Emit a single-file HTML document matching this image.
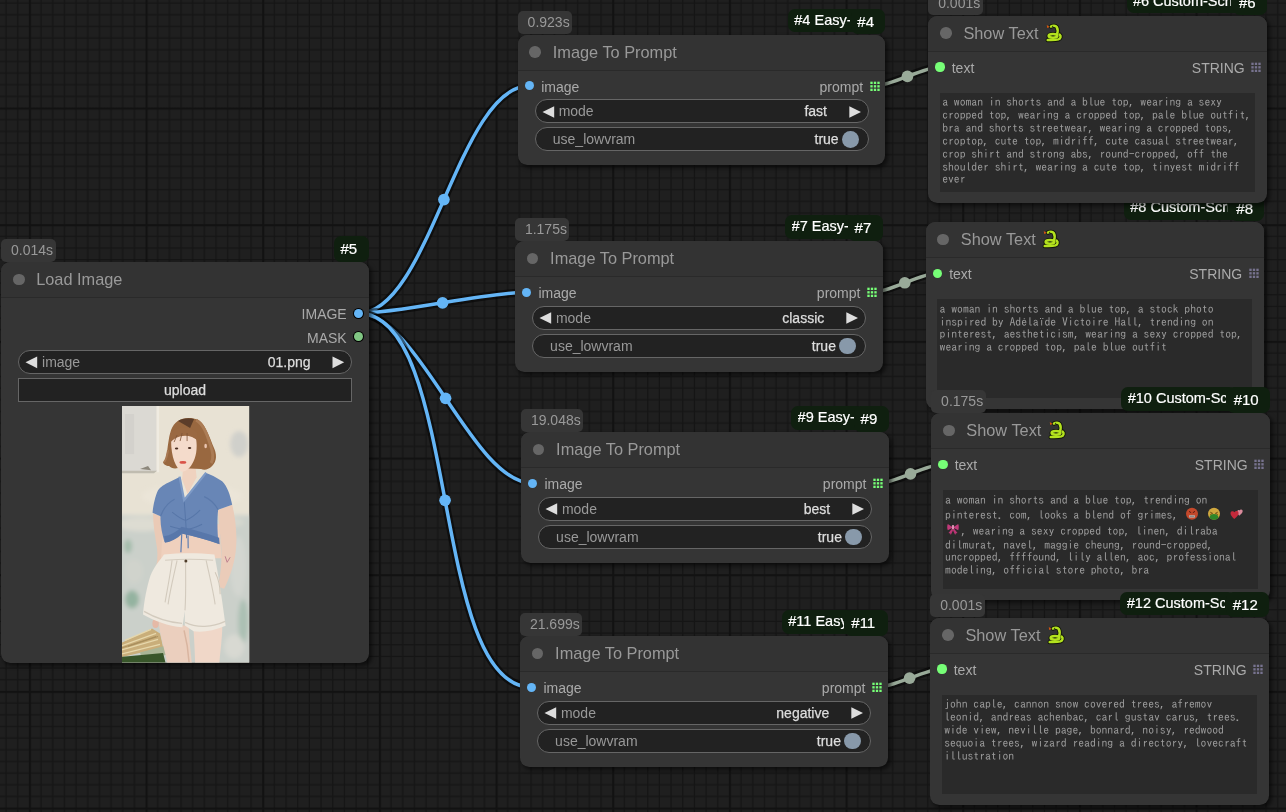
<!DOCTYPE html>
<html><head><meta charset="utf-8"><title>ComfyUI</title><style>
html,body{margin:0;padding:0;background:#1f1f1f;}
#c{will-change:transform;position:relative;width:1286px;height:812px;overflow:hidden;background:#1f1f1f;font-family:"Liberation Sans",Arial,sans-serif;}
#c svg{position:absolute;left:0;top:0;overflow:visible}
.n{position:absolute;background:#353535;border-radius:9.3px;box-shadow:2.3px 2.3px 4px rgba(0,0,0,.55);}
.n .tt{position:absolute;left:0;top:0;right:0;height:35px;background:#333;border-radius:9.3px 9.3px 0 0;}
.n .sep{position:absolute;left:0;right:0;top:35px;height:1.2px;background:rgba(0,0,0,.2);}
.n .dot{position:absolute;left:11.7px;top:11.7px;width:11.7px;height:11.7px;border-radius:50%;background:#666;}
.n .title{position:absolute;left:35px;top:0;height:35px;line-height:35px;font-size:16.33px;color:#999;white-space:nowrap;}
.t{position:absolute;font-size:14px;line-height:16px;height:16px;white-space:nowrap;color:#aaa;}
.r{text-align:right;}
.sl{position:absolute;width:9.34px;height:9.34px;border-radius:50%;}
.so{box-shadow:0 0 0 1px #000;}
.w{position:absolute;height:24px;box-sizing:border-box;background:#222;border:1.17px solid #666;border-radius:12px;}
.w.b{border-radius:0;}
.lab{color:#999;}
.val{color:#ddd;-webkit-text-stroke:.25px #ddd;}
.tb{position:absolute;height:23px;background:#363636;border-radius:5px;color:#999;font-size:14px;line-height:23px;white-space:nowrap;box-sizing:border-box;}
.gb{position:absolute;top:-25.6px;background:#0f1f0f;border-radius:7px;color:#fff;-webkit-text-stroke:.2px #fff;white-space:nowrap;overflow:hidden;box-sizing:border-box;padding-left:6.4px;}
.gw{height:23.3px;font-size:14.5px;line-height:22.5px;}
.gw span{display:block;overflow:hidden;}
.gs{height:25.2px;font-size:15px;line-height:25.4px;}
.ta{position:absolute;background:#2a2a2a;overflow:hidden;}
.ta div{position:absolute;left:2.4px;top:3.6px;font-family:"IPAGothic","Liberation Mono",monospace;font-size:11.667px;line-height:12.84px;color:#9b9b9b;white-space:pre;}
#c svg.e{position:static;vertical-align:-3.94px;overflow:hidden}
</style></head><body><div id="c">
<svg width="1286" height="812" viewBox="0 0 1286 812">
<defs><pattern id="g" patternUnits="userSpaceOnUse" x="-87.84" y="-9.17" width="116.67" height="116.67">
<rect width="116.67" height="116.67" fill="#1f1f1f"/>
<rect x="11.52" y="0" width="1.4" height="116.67" fill="#151515"/>
<rect y="11.52" x="0" height="1.4" width="116.67" fill="#151515"/>
<rect x="23.18" y="0" width="1.4" height="116.67" fill="#151515"/>
<rect y="23.18" x="0" height="1.4" width="116.67" fill="#151515"/>
<rect x="34.85" y="0" width="1.4" height="116.67" fill="#151515"/>
<rect y="34.85" x="0" height="1.4" width="116.67" fill="#151515"/>
<rect x="46.52" y="0" width="1.4" height="116.67" fill="#151515"/>
<rect y="46.52" x="0" height="1.4" width="116.67" fill="#151515"/>
<rect x="58.18" y="0" width="1.4" height="116.67" fill="#151515"/>
<rect y="58.18" x="0" height="1.4" width="116.67" fill="#151515"/>
<rect x="69.85" y="0" width="1.4" height="116.67" fill="#151515"/>
<rect y="69.85" x="0" height="1.4" width="116.67" fill="#151515"/>
<rect x="81.52" y="0" width="1.4" height="116.67" fill="#151515"/>
<rect y="81.52" x="0" height="1.4" width="116.67" fill="#151515"/>
<rect x="93.18" y="0" width="1.4" height="116.67" fill="#151515"/>
<rect y="93.18" x="0" height="1.4" width="116.67" fill="#151515"/>
<rect x="104.85" y="0" width="1.4" height="116.67" fill="#151515"/>
<rect y="104.85" x="0" height="1.4" width="116.67" fill="#151515"/>
<rect x="0" y="0" width="2.2" height="116.67" fill="#121212"/>
<rect x="0" y="0" height="2.2" width="116.67" fill="#121212"/>
</pattern></defs>
<rect width="1286" height="812" fill="url(#g)"/>
<path d="M358.4 313.33 C429.56 313.33 458.31 85.83 529.47 85.83" fill="none" stroke="rgba(0,0,0,.5)" stroke-width="8.2"/>
<path d="M358.4 313.33 C429.56 313.33 458.31 85.83 529.47 85.83" fill="none" stroke="#64b5f6" stroke-width="3.5"/>
<circle cx="443.93" cy="199.58" r="5.83" fill="#64b5f6"/>
<path d="M358.4 313.33 C400.82 313.33 484.35 292.33 526.77 292.33" fill="none" stroke="rgba(0,0,0,.5)" stroke-width="8.2"/>
<path d="M358.4 313.33 C400.82 313.33 484.35 292.33 526.77 292.33" fill="none" stroke="#64b5f6" stroke-width="3.5"/>
<circle cx="442.58" cy="302.83" r="5.83" fill="#64b5f6"/>
<path d="M358.4 313.33 C419.28 313.33 471.89 483.33 532.77 483.33" fill="none" stroke="rgba(0,0,0,.5)" stroke-width="8.2"/>
<path d="M358.4 313.33 C419.28 313.33 471.89 483.33 532.77 483.33" fill="none" stroke="#64b5f6" stroke-width="3.5"/>
<circle cx="445.58" cy="398.33" r="5.83" fill="#64b5f6"/>
<path d="M358.4 313.33 C461.46 313.33 428.71 687.33 531.77 687.33" fill="none" stroke="rgba(0,0,0,.5)" stroke-width="8.2"/>
<path d="M358.4 313.33 C461.46 313.33 428.71 687.33 531.77 687.33" fill="none" stroke="#64b5f6" stroke-width="3.5"/>
<circle cx="445.08" cy="500.33" r="5.83" fill="#64b5f6"/>
<path d="M874.8 85.83 C891.79 85.83 923.08 66.93 940.07 66.93" fill="none" stroke="rgba(0,0,0,.5)" stroke-width="8.2"/>
<path d="M874.8 85.83 C891.79 85.83 923.08 66.93 940.07 66.93" fill="none" stroke="#9a9" stroke-width="3.5"/>
<circle cx="907.43" cy="76.38" r="5.83" fill="#9a9"/>
<path d="M872.1 292.33 C889.13 292.33 920.44 273.23 937.47 273.23" fill="none" stroke="rgba(0,0,0,.5)" stroke-width="8.2"/>
<path d="M872.1 292.33 C889.13 292.33 920.44 273.23 937.47 273.23" fill="none" stroke="#9a9" stroke-width="3.5"/>
<circle cx="904.78" cy="282.78" r="5.83" fill="#9a9"/>
<path d="M878.1 483.33 C895 483.33 926.07 464.33 942.97 464.33" fill="none" stroke="rgba(0,0,0,.5)" stroke-width="8.2"/>
<path d="M878.1 483.33 C895 483.33 926.07 464.33 942.97 464.33" fill="none" stroke="#9a9" stroke-width="3.5"/>
<circle cx="910.53" cy="473.83" r="5.83" fill="#9a9"/>
<path d="M877.1 687.33 C893.98 687.33 925.19 668.93 942.07 668.93" fill="none" stroke="rgba(0,0,0,.5)" stroke-width="8.2"/>
<path d="M877.1 687.33 C893.98 687.33 925.19 668.93 942.07 668.93" fill="none" stroke="#9a9" stroke-width="3.5"/>
<circle cx="909.58" cy="678.13" r="5.83" fill="#9a9"/>
</svg>
<div class="n" style="left:1.2px;top:262px;width:367.7px;height:401px">
<div class="tt"></div><div class="sep"></div><div class="dot"></div><div class="title">Load Image</div>
<div class="sl so" style="left:352.53px;top:46.66px;background:#64b5f6"></div>
<div class="t r" style="right:22.17px;top:44.36px">IMAGE</div>
<div class="sl so" style="left:352.53px;top:70px;background:#81c784"></div>
<div class="t r" style="right:22.17px;top:67.7px">MASK</div>
<div class="w" style="left:16.92px;top:88.22px;width:334px"></div>
<svg width="10" height="10" fill="#ddd"><path d="M36.17 94.5L24.5 100.33L36.17 106.17Z"/><path d="M331.53 94.5L343.2 100.33L331.53 106.17Z"/></svg>
<div class="t lab" style="left:40.83px;top:92.2px">image</div>
<div class="t r val" style="right:58.33px;top:92.2px">01.png</div>
<div class="w b" style="left:16.92px;top:116.22px;width:334px"></div>
<div class="t val" style="left:0;width:367.7px;text-align:center;top:120.2px">upload</div>
<svg style="left:120.6px;top:144.2px" width="127.2" height="256.5" viewBox="0 0 127 256" preserveAspectRatio="none">
<defs><filter id="bl" x="-5%" y="-5%" width="110%" height="110%"><feGaussianBlur stdDeviation="0.55"/></filter>
<filter id="b2" x="-20%" y="-20%" width="140%" height="140%"><feGaussianBlur stdDeviation="2.2"/></filter>
<clipPath id="pc"><rect width="127" height="256"/></clipPath></defs>
<g clip-path="url(#pc)">
<rect x="-3" y="-3" width="133" height="262" fill="#e8e2d4"/>
<g filter="url(#b2)">
<rect x="-6" y="109" width="140" height="152" fill="#cbd0ca"/>
<ellipse cx="20" cy="118" rx="26" ry="7" fill="#dddcd2"/>
<ellipse cx="98" cy="116" rx="24" ry="6" fill="#d6d8cf"/>
<ellipse cx="10" cy="193" rx="7" ry="9" fill="#94b3a0"/>
<ellipse cx="6" cy="140" rx="4" ry="7" fill="#a3bcab"/>
<ellipse cx="12" cy="165" rx="9" ry="12" fill="#d0d3cc"/>
<ellipse cx="116" cy="160" rx="8" ry="30" fill="#d3d6d0"/>
<ellipse cx="121" cy="215" rx="5" ry="22" fill="#abc0b3"/>
<ellipse cx="112" cy="240" rx="10" ry="12" fill="#d8d9d2"/>
<ellipse cx="117" cy="38" rx="9" ry="13" fill="#d0d0cb"/>
<ellipse cx="70" cy="90" rx="50" ry="12" fill="#ebe5d8"/>
</g>
<g filter="url(#bl)">
<rect x="-3" y="-3" width="37.6" height="68" fill="#dbd9d3"/>
<rect x="3" y="8" width="9" height="40" fill="#d3d1cc"/>
<rect x="34.6" y="-3" width="2.4" height="69" fill="#efebe1"/>
<path d="M-3 64.500H35L32 67H-3z" fill="#c0bcb0"/>
<path d="M18 63l8-3 3 4z" fill="#8d887c"/>
<path d="M-2 237L30 222l8 5 3 14-43 10z" fill="#c9ae7a"/>
<path d="M-2 240l36-13M-2 244l38-11M3 234l26-11M-2 248l40-10" stroke="#e6d7ab" stroke-width="1.300" fill="none"/>
<path d="M-2 242l36-12M6 240l30-10" stroke="#9d8453" stroke-width=".7" fill="none"/>
<path d="M18 246l26-7 2 9-26 5z" fill="#a9b596"/>
<path d="M-2 250.500l43-4 3 12H-2z" fill="#38562a"/>
<path d="M36.300 214L66.700 220c.3 14 2.300 28 3.200 38H45.500C43 244 38 230 36.300 214z" fill="#ebcfbe"/>
<path d="M71.500 223l28.800-5c-.3 15-2.300 28-3.300 40H73c0-11-1-23-1.500-35z" fill="#f0d7c8"/>
<path d="M62 224q4 16 5 32" stroke="#d9b5a0" stroke-width="1.500" fill="none"/>
<ellipse cx="33.500" cy="217" rx="3.200" ry="4.500" fill="#e5b9a6"/>
<path d="M31 107c0 11 2 23 4 35 1 8 0 16-2 24l5 2c3-10 4-20 4-30-1-10-3-20-3.500-28z" fill="#eacab6"/>
<path d="M96 103.500l14-5c3 12 5 27 4 42-1 15-6 30-12 42l-6-2c3-15 4-30 3-42-1-13-3-23-3-35z" fill="#ebccb9"/>
<path d="M103 150l2 6 3-5" stroke="#b9788a" stroke-width=".9" fill="none"/>
<path d="M41 118h56l2.500 34H39z" fill="#efd0bd"/>
<path d="M41.900 148.200c16-1.700 34-1.700 50.400 0 2.700 14 6.700 37 10.400 66l.8 5c-11.500 5-23.500 7-32 5.500l-8.800-5.700v-14.300l-2.400 16c-14.300-.7-28.300-6.700-39.300-12.700 1-14 4-28 7.200-38.200 3.800-9.800 9.800-15.800 13.700-21.600z" fill="#efe9df"/>
<path d="M43 154c16-1.500 33-1.500 48 0" stroke="#d4ccbf" stroke-width="1" fill="none"/>
<path d="M50 154c-2 16-5 30-7 42M55 154c-3 14-7 30-9 44M84 154c3 14 7 30 9 44M63.500 156c0 16 .5 32-.6 48" stroke="#d2cabd" stroke-width="1.100" fill="none"/>
<path d="M22 205c12 7 25 11 38 12M63 216c12 6 27 5 40-1" stroke="#d3cbbe" stroke-width="1.300" fill="none"/>
<path d="M93 166c3 6 5 14 5 22" stroke="#cfc6b8" stroke-width="1" fill="none"/>
<circle cx="63.800" cy="154.600" r="1.500" fill="#4f3d2c"/>
<path d="M58 70.500l-9 4.500c-7 3-11 6-13 9-3 6-5 16-5.500 22.500l8 3.500c-.5 8 1.500 18 4 26 6-1 12-4 17-9 12 3 25 6 37 10.500-1.500-12-1.500-25-.5-34l14-5c-2-10.500-5-18.500-10-23.500-6-4-12-7-16.500-8.500L62 94z" fill="#6886b6"/>
<path d="M38.500 110c3-8 8-14 14-17M96 103.500c-4-7-9-11-14-13" stroke="#5a79ab" stroke-width="1.200" fill="none"/>
<path d="M62 94c1 12 2 25 2.500 38M50 106c5 4 9 7 13 8M78 104c-5 5-9 8-14 10M48 120c6 2 11 3 15.500 3M80 118c-6 3-11 5-16 5" stroke="#5776a8" stroke-width="1" fill="none"/>
<path d="M42 130c6-1 12-4 17.500-9.500 12 3 25 6.500 37.500 11l.5 6.500c-12.500-4.500-25.500-8-37.500-10.500-5 5-11 8-17 9z" fill="#5877aa"/>
<path d="M57.500 70.500L62 94 84 66.500" stroke="#7d9ac6" stroke-width="2.200" fill="none"/>
<path d="M59.700 127l-.9 19M65.900 129l.2 13" stroke="#5f7eb2" stroke-width="1.200" fill="none"/>
<path d="M61 62l12-5 1.500 14-9 17-5.500-15z" fill="#efd2bf"/>
<path d="M66.700 12c6.300 0 12.300 2 15.300 8 4 7 6 12 9 20 4 8 4 15-1 20-4 4-8 4-11 3l-23-1c-4 1-7 0-9-2-3 0-6-2-6-4 3-2 3-6 4-10 1-8 2-16 4-22 3-8 9-12 17.700-12z" fill="#99683f"/>
<path d="M56 15c4-3 11-3.500 16-2l-4 9z" fill="#5b3e29"/>
<path d="M74 14c8 5 11 15 14 24 3 8 4 14 1 19" stroke="#ab7b54" stroke-width="3" fill="none"/>
<path d="M46 44c-1 6-2 10-4 12" stroke="#a87852" stroke-width="2" fill="none"/>
<path d="M49 34C55 27 68 27 74 33c1.500 9 0 19-4 25-3 5-7 8-10.500 7.500C54 62 49 52 49 34z" fill="#f4dbcb"/>
<path d="M47 38c7-10 21-11 29-3l-1-8c-7-8-21-7-27 1z" fill="#9a6943"/>
<path d="M52 36l3-7M58 35l2-8M65 35l0-8" stroke="#7d5335" stroke-width=".8" fill="none"/>
<ellipse cx="54.500" cy="42.500" rx="1.700" ry="1" fill="#4a2f22"/><ellipse cx="67.500" cy="42" rx="1.700" ry="1" fill="#4a2f22"/>
<ellipse cx="60.800" cy="56.300" rx="3.400" ry="1.400" fill="#d9534a"/>
<ellipse cx="83.500" cy="40" rx="1.300" ry="2.200" fill="#e9c4b0"/>
</g></g></svg>
<div class="tb" style="left:0;top:-23.3px;width:54.8px;padding-left:9.8px">0.014s</div>
<div class="gb gs" style="right:0;width:35.3px;padding-left:6.9px">#5</div>
</div>
<div class="n" style="left:517.8px;top:34.5px;width:367.5px;height:130.7px">
<div class="tt"></div><div class="sep"></div><div class="dot"></div><div class="title">Image To Prompt</div>
<div class="sl" style="left:7px;top:46.66px;background:#64b5f6"></div>
<div class="t" style="left:23.33px;top:44.36px">image</div>
<svg width="10" height="10" fill="#7f7"><rect x="352.33" y="46.67" width="2.33" height="2.33"/><rect x="352.33" y="50.17" width="2.33" height="2.33"/><rect x="352.33" y="53.67" width="2.33" height="2.33"/><rect x="355.83" y="46.67" width="2.33" height="2.33"/><rect x="355.83" y="50.17" width="2.33" height="2.33"/><rect x="355.83" y="53.67" width="2.33" height="2.33"/><rect x="359.33" y="46.67" width="2.33" height="2.33"/><rect x="359.33" y="50.17" width="2.33" height="2.33"/><rect x="359.33" y="53.67" width="2.33" height="2.33"/></svg>
<div class="t r" style="right:22.17px;top:44.36px">prompt</div>
<div class="w" style="left:16.92px;top:64.88px;width:333.8px"></div>
<svg width="10" height="10" fill="#ddd"><path d="M36.17 71.17L24.5 77L36.17 82.83Z"/><path d="M331.33 71.17L343 77L331.33 82.83Z"/></svg>
<div class="t lab" style="left:40.83px;top:68.87px">mode</div>
<div class="t r val" style="right:58.33px;top:68.87px">fast</div>
<div class="w" style="left:16.92px;top:92.88px;width:333.8px"></div>
<div class="t lab" style="left:35px;top:96.87px">use_lowvram</div>
<div class="t r val" style="right:46.67px;top:96.87px">true</div>
<div style="position:absolute;left:324.1px;top:96.6px;width:16.8px;height:16.8px;border-radius:50%;background:#89a"></div>
<div class="tb" style="left:0;top:-23.3px;width:54.4px;padding-left:9.8px">0.923s</div>
<div class="gb gw" style="right:25.4px;width:72px"><span style="width:56px">#4 Easy-Use</span></div>
<div class="gb gs" style="right:0;width:34.4px">#4</div>
</div>
<div class="n" style="left:515.1px;top:241px;width:367.5px;height:130.7px">
<div class="tt"></div><div class="sep"></div><div class="dot"></div><div class="title">Image To Prompt</div>
<div class="sl" style="left:7px;top:46.66px;background:#64b5f6"></div>
<div class="t" style="left:23.33px;top:44.36px">image</div>
<svg width="10" height="10" fill="#7f7"><rect x="352.33" y="46.67" width="2.33" height="2.33"/><rect x="352.33" y="50.17" width="2.33" height="2.33"/><rect x="352.33" y="53.67" width="2.33" height="2.33"/><rect x="355.83" y="46.67" width="2.33" height="2.33"/><rect x="355.83" y="50.17" width="2.33" height="2.33"/><rect x="355.83" y="53.67" width="2.33" height="2.33"/><rect x="359.33" y="46.67" width="2.33" height="2.33"/><rect x="359.33" y="50.17" width="2.33" height="2.33"/><rect x="359.33" y="53.67" width="2.33" height="2.33"/></svg>
<div class="t r" style="right:22.17px;top:44.36px">prompt</div>
<div class="w" style="left:16.92px;top:64.88px;width:333.8px"></div>
<svg width="10" height="10" fill="#ddd"><path d="M36.17 71.17L24.5 77L36.17 82.83Z"/><path d="M331.33 71.17L343 77L331.33 82.83Z"/></svg>
<div class="t lab" style="left:40.83px;top:68.87px">mode</div>
<div class="t r val" style="right:58.33px;top:68.87px">classic</div>
<div class="w" style="left:16.92px;top:92.88px;width:333.8px"></div>
<div class="t lab" style="left:35px;top:96.87px">use_lowvram</div>
<div class="t r val" style="right:46.67px;top:96.87px">true</div>
<div style="position:absolute;left:324.1px;top:96.6px;width:16.8px;height:16.8px;border-radius:50%;background:#89a"></div>
<div class="tb" style="left:0;top:-23.3px;width:54.4px;padding-left:9.8px">1.175s</div>
<div class="gb gw" style="right:25.4px;width:72px"><span style="width:56px">#7 Easy-Use</span></div>
<div class="gb gs" style="right:0;width:34.4px">#7</div>
</div>
<div class="n" style="left:521.1px;top:432px;width:367.5px;height:130.7px">
<div class="tt"></div><div class="sep"></div><div class="dot"></div><div class="title">Image To Prompt</div>
<div class="sl" style="left:7px;top:46.66px;background:#64b5f6"></div>
<div class="t" style="left:23.33px;top:44.36px">image</div>
<svg width="10" height="10" fill="#7f7"><rect x="352.33" y="46.67" width="2.33" height="2.33"/><rect x="352.33" y="50.17" width="2.33" height="2.33"/><rect x="352.33" y="53.67" width="2.33" height="2.33"/><rect x="355.83" y="46.67" width="2.33" height="2.33"/><rect x="355.83" y="50.17" width="2.33" height="2.33"/><rect x="355.83" y="53.67" width="2.33" height="2.33"/><rect x="359.33" y="46.67" width="2.33" height="2.33"/><rect x="359.33" y="50.17" width="2.33" height="2.33"/><rect x="359.33" y="53.67" width="2.33" height="2.33"/></svg>
<div class="t r" style="right:22.17px;top:44.36px">prompt</div>
<div class="w" style="left:16.92px;top:64.88px;width:333.8px"></div>
<svg width="10" height="10" fill="#ddd"><path d="M36.17 71.17L24.5 77L36.17 82.83Z"/><path d="M331.33 71.17L343 77L331.33 82.83Z"/></svg>
<div class="t lab" style="left:40.83px;top:68.87px">mode</div>
<div class="t r val" style="right:58.33px;top:68.87px">best</div>
<div class="w" style="left:16.92px;top:92.88px;width:333.8px"></div>
<div class="t lab" style="left:35px;top:96.87px">use_lowvram</div>
<div class="t r val" style="right:46.67px;top:96.87px">true</div>
<div style="position:absolute;left:324.1px;top:96.6px;width:16.8px;height:16.8px;border-radius:50%;background:#89a"></div>
<div class="tb" style="left:0;top:-23.3px;width:62.2px;padding-left:9.8px">19.048s</div>
<div class="gb gw" style="right:25.4px;width:72px"><span style="width:56px">#9 Easy-Use</span></div>
<div class="gb gs" style="right:0;width:34.4px">#9</div>
</div>
<div class="n" style="left:520.1px;top:636px;width:367.5px;height:130.7px">
<div class="tt"></div><div class="sep"></div><div class="dot"></div><div class="title">Image To Prompt</div>
<div class="sl" style="left:7px;top:46.66px;background:#64b5f6"></div>
<div class="t" style="left:23.33px;top:44.36px">image</div>
<svg width="10" height="10" fill="#7f7"><rect x="352.33" y="46.67" width="2.33" height="2.33"/><rect x="352.33" y="50.17" width="2.33" height="2.33"/><rect x="352.33" y="53.67" width="2.33" height="2.33"/><rect x="355.83" y="46.67" width="2.33" height="2.33"/><rect x="355.83" y="50.17" width="2.33" height="2.33"/><rect x="355.83" y="53.67" width="2.33" height="2.33"/><rect x="359.33" y="46.67" width="2.33" height="2.33"/><rect x="359.33" y="50.17" width="2.33" height="2.33"/><rect x="359.33" y="53.67" width="2.33" height="2.33"/></svg>
<div class="t r" style="right:22.17px;top:44.36px">prompt</div>
<div class="w" style="left:16.92px;top:64.88px;width:333.8px"></div>
<svg width="10" height="10" fill="#ddd"><path d="M36.17 71.17L24.5 77L36.17 82.83Z"/><path d="M331.33 71.17L343 77L331.33 82.83Z"/></svg>
<div class="t lab" style="left:40.83px;top:68.87px">mode</div>
<div class="t r val" style="right:58.33px;top:68.87px">negative</div>
<div class="w" style="left:16.92px;top:92.88px;width:333.8px"></div>
<div class="t lab" style="left:35px;top:96.87px">use_lowvram</div>
<div class="t r val" style="right:46.67px;top:96.87px">true</div>
<div style="position:absolute;left:324.1px;top:96.6px;width:16.8px;height:16.8px;border-radius:50%;background:#89a"></div>
<div class="tb" style="left:0;top:-23.3px;width:62.2px;padding-left:9.8px">21.699s</div>
<div class="gb gw" style="right:33.7px;width:72px"><span style="width:56px">#11 Easy-Use</span></div>
<div class="gb gs" style="right:0;width:42.7px">#11</div>
</div>
<div class="n" style="left:925.8px;top:221.9px;width:338.5px;height:187.1px">
<div class="tt"></div><div class="sep"></div><div class="dot"></div><div class="title">Show Text</div><svg style="left:117.5px;top:8.4px" width="17" height="18.5" viewBox="0 0 17 18.5"><title>🐍</title><g fill="none" stroke-linecap="round" stroke-linejoin="round"><g stroke="#12160a" stroke-width="4.300"><path d="M5 2.600C6.500 1.500 9.600 1.400 10.700 3C11.900 5 11.700 8.600 10.900 10.600"/><ellipse cx="7" cy="11.900" rx="4.400" ry="1.800"/><path d="M13.700 10.600C15.300 12 14.700 14.700 12.400 15.400C9.400 16.200 4.500 15.900 1.700 16.100"/></g><g stroke="#b3e21e" stroke-width="2.500"><path d="M5 2.600C6.500 1.500 9.600 1.400 10.700 3C11.900 5 11.700 8.600 10.900 10.600"/><ellipse cx="7" cy="11.900" rx="4.400" ry="1.800"/><path d="M13.700 10.600C15.300 12 14.700 14.700 12.400 15.400C9.400 16.200 4.500 15.900 1.700 16.100"/></g></g><path d="M.8 1L3.700 2.900 1.200 4.100Z" fill="#d8560f"/><circle cx="6.700" cy="2.400" r=".55" fill="#1c2a10"/></svg>
<div class="sl" style="left:7px;top:46.66px;background:#7f7"></div>
<div class="t" style="left:23.33px;top:44.36px">text</div>
<svg width="10" height="10" fill="#77738f"><rect x="323.33" y="46.67" width="2.33" height="2.33"/><rect x="323.33" y="50.17" width="2.33" height="2.33"/><rect x="323.33" y="53.67" width="2.33" height="2.33"/><rect x="326.83" y="46.67" width="2.33" height="2.33"/><rect x="326.83" y="50.17" width="2.33" height="2.33"/><rect x="326.83" y="53.67" width="2.33" height="2.33"/><rect x="330.33" y="46.67" width="2.33" height="2.33"/><rect x="330.33" y="50.17" width="2.33" height="2.33"/><rect x="330.33" y="53.67" width="2.33" height="2.33"/></svg>
<div class="t r" style="right:22.17px;top:44.36px">STRING</div>
<div class="ta" style="left:11.4px;top:77.2px;width:315.3px;height:99px"><div>a woman in shorts and a blue top, a stock photo
inspired by Adélaïde Victoire Hall, trending on
pinterest, aestheticism, wearing a sexy cropped top,
wearing a cropped top, pale blue outfit</div></div>
<div class="gb gw" style="right:25.4px;width:115px"><span style="width:98.2px">#8 Custom-Scripts</span></div>
<div class="gb gs" style="right:0;width:34.4px">#8</div>
</div>
<div class="n" style="left:928.4px;top:15.6px;width:338.5px;height:187.1px">
<div class="tt"></div><div class="sep"></div><div class="dot"></div><div class="title">Show Text</div><svg style="left:117.5px;top:8.4px" width="17" height="18.5" viewBox="0 0 17 18.5"><title>🐍</title><g fill="none" stroke-linecap="round" stroke-linejoin="round"><g stroke="#12160a" stroke-width="4.300"><path d="M5 2.600C6.500 1.500 9.600 1.400 10.700 3C11.900 5 11.700 8.600 10.900 10.600"/><ellipse cx="7" cy="11.900" rx="4.400" ry="1.800"/><path d="M13.700 10.600C15.300 12 14.700 14.700 12.400 15.400C9.400 16.200 4.500 15.900 1.700 16.100"/></g><g stroke="#b3e21e" stroke-width="2.500"><path d="M5 2.600C6.500 1.500 9.600 1.400 10.700 3C11.900 5 11.700 8.600 10.900 10.600"/><ellipse cx="7" cy="11.900" rx="4.400" ry="1.800"/><path d="M13.700 10.600C15.300 12 14.700 14.700 12.400 15.400C9.400 16.200 4.500 15.900 1.700 16.100"/></g></g><path d="M.8 1L3.700 2.900 1.200 4.100Z" fill="#d8560f"/><circle cx="6.700" cy="2.400" r=".55" fill="#1c2a10"/></svg>
<div class="sl" style="left:7px;top:46.66px;background:#7f7"></div>
<div class="t" style="left:23.33px;top:44.36px">text</div>
<svg width="10" height="10" fill="#77738f"><rect x="323.33" y="46.67" width="2.33" height="2.33"/><rect x="323.33" y="50.17" width="2.33" height="2.33"/><rect x="323.33" y="53.67" width="2.33" height="2.33"/><rect x="326.83" y="46.67" width="2.33" height="2.33"/><rect x="326.83" y="50.17" width="2.33" height="2.33"/><rect x="326.83" y="53.67" width="2.33" height="2.33"/><rect x="330.33" y="46.67" width="2.33" height="2.33"/><rect x="330.33" y="50.17" width="2.33" height="2.33"/><rect x="330.33" y="53.67" width="2.33" height="2.33"/></svg>
<div class="t r" style="right:22.17px;top:44.36px">STRING</div>
<div class="ta" style="left:11.4px;top:77.2px;width:315.3px;height:99px"><div>a woman in shorts and a blue top, wearing a sexy
cropped top, wearing a cropped top, pale blue outfit,
bra and shorts streetwear, wearing a cropped tops,
croptop, cute top, midriff, cute casual streetwear,
crop shirt and strong abs, round-cropped, off the
shoulder shirt, wearing a cute top, tinyest midriff
ever</div></div>
<div class="tb" style="left:0;top:-23.3px;width:54.4px;padding-left:9.8px">0.001s</div>
<div class="gb gw" style="right:25.4px;width:115px"><span style="width:98.2px">#6 Custom-Scripts</span></div>
<div class="gb gs" style="right:0;width:34.4px">#6</div>
</div>
<div class="n" style="left:931.3px;top:413px;width:338.5px;height:187.1px">
<div class="tt"></div><div class="sep"></div><div class="dot"></div><div class="title">Show Text</div><svg style="left:117.5px;top:8.4px" width="17" height="18.5" viewBox="0 0 17 18.5"><title>🐍</title><g fill="none" stroke-linecap="round" stroke-linejoin="round"><g stroke="#12160a" stroke-width="4.300"><path d="M5 2.600C6.500 1.500 9.600 1.400 10.700 3C11.900 5 11.700 8.600 10.900 10.600"/><ellipse cx="7" cy="11.900" rx="4.400" ry="1.800"/><path d="M13.700 10.600C15.300 12 14.700 14.700 12.400 15.400C9.400 16.200 4.500 15.900 1.700 16.100"/></g><g stroke="#b3e21e" stroke-width="2.500"><path d="M5 2.600C6.500 1.500 9.600 1.400 10.700 3C11.900 5 11.700 8.600 10.900 10.600"/><ellipse cx="7" cy="11.900" rx="4.400" ry="1.800"/><path d="M13.700 10.600C15.300 12 14.700 14.700 12.400 15.400C9.400 16.200 4.500 15.900 1.700 16.100"/></g></g><path d="M.8 1L3.700 2.900 1.200 4.100Z" fill="#d8560f"/><circle cx="6.700" cy="2.400" r=".55" fill="#1c2a10"/></svg>
<div class="sl" style="left:7px;top:46.66px;background:#7f7"></div>
<div class="t" style="left:23.33px;top:44.36px">text</div>
<svg width="10" height="10" fill="#77738f"><rect x="323.33" y="46.67" width="2.33" height="2.33"/><rect x="323.33" y="50.17" width="2.33" height="2.33"/><rect x="323.33" y="53.67" width="2.33" height="2.33"/><rect x="326.83" y="46.67" width="2.33" height="2.33"/><rect x="326.83" y="50.17" width="2.33" height="2.33"/><rect x="326.83" y="53.67" width="2.33" height="2.33"/><rect x="330.33" y="46.67" width="2.33" height="2.33"/><rect x="330.33" y="50.17" width="2.33" height="2.33"/><rect x="330.33" y="53.67" width="2.33" height="2.33"/></svg>
<div class="t r" style="right:22.17px;top:44.36px">STRING</div>
<div class="ta" style="left:11.4px;top:77.2px;width:315.3px;height:99px"><div>a woman in shorts and a blue top, trending on
pinterest. com, looks a blend of grimes, <svg class="e" width="16" height="15.94" viewBox="0 0 16 15.94"><title>😡</title><g transform="translate(0 -2.85)"><circle cx="8" cy="9.700" r="6" fill="#c3482b"/><path d="M5 7.200l2.200 1.400M11 7.200L8.800 8.600" stroke="#5a1a10" stroke-width="1" fill="none"/><rect x="5" y="11" width="6" height="2.300" rx=".6" fill="#c4c6c8"/><path d="M5.500 12.100h5" stroke="#555" stroke-width=".7"/></g></svg> <svg class="e" width="16" height="15.94" viewBox="0 0 16 15.94"><title>🤮</title><g transform="translate(0 -2.85)"><circle cx="8" cy="9.700" r="6" fill="#cfa73e"/><path d="M4.200 8l2.400 1.200L4.200 10.400M11.800 8L9.400 9.200l2.400 1.200" stroke="#6b4a12" stroke-width=".9" fill="none"/><path d="M3.400 13.300c.6-2.600 2.300-3.400 4.600-3.400s4 .8 4.600 3.400c-1.100 1.500-2.800 2.400-4.600 2.400s-3.500-.9-4.600-2.400z" fill="#2f8529"/></g></svg> <svg class="e" width="16" height="15.94" viewBox="0 0 16 15.94"><title>💕</title><g transform="translate(0 -2.85)"><path d="M11.400 6.300c.8-1.300 2.700-1.200 3.200.1.500 1.500-.9 3.200-3.400 5.200-1.700-1.900-2.500-3.500-1.900-4.700.5-1.100 1.600-1.300 2.100-.6z" fill="#d98a9b"/><path d="M6.500 8.100c1-1.700 3.400-1.500 4 .2.600 1.900-1.200 4-4.300 6.500C3.600 12.400 2 10.300 2.600 8.400c.6-1.700 2.900-1.900 3.900-.3z" fill="#c42a3b"/></g></svg>
<svg class="e" width="16" height="15.94" viewBox="0 0 16 15.94"><title>🎀</title><g transform="translate(0 -3.3)"><path d="M8 7.800L2.800 4.400c-.8 1.600-.8 4.400 0 6.200zM8 7.800l5.200-3.400c.8 1.600.8 4.400 0 6.200z" fill="#c23a7a"/><path d="M7.300 8.600l-3.800 4.800 1.700.3.600 1.500 2.600-5.400zM8.700 8.600l3.800 4.800-1.700.3-.6 1.500-2.600-5.400z" fill="#bb3574"/><rect x="6.900" y="5.400" width="2.200" height="4.200" rx=".8" fill="#dc93b4"/></g></svg>, wearing a sexy cropped top, linen, dilraba
dilmurat, navel, maggie cheung, round-cropped,
uncropped, ffffound, lily allen, aoc, professional
modeling, official store photo, bra</div></div>
<div class="tb" style="left:0;top:-23.3px;width:54.4px;padding-left:9.8px">0.175s</div>
<div class="gb gw" style="right:33.5px;width:115px"><span style="width:98.2px">#10 Custom-Scripts</span></div>
<div class="gb gs" style="right:0;width:42.5px">#10</div>
</div>
<div class="n" style="left:930.4px;top:617.6px;width:338.5px;height:187.1px">
<div class="tt"></div><div class="sep"></div><div class="dot"></div><div class="title">Show Text</div><svg style="left:117.5px;top:8.4px" width="17" height="18.5" viewBox="0 0 17 18.5"><title>🐍</title><g fill="none" stroke-linecap="round" stroke-linejoin="round"><g stroke="#12160a" stroke-width="4.300"><path d="M5 2.600C6.500 1.500 9.600 1.400 10.700 3C11.900 5 11.700 8.600 10.900 10.600"/><ellipse cx="7" cy="11.900" rx="4.400" ry="1.800"/><path d="M13.700 10.600C15.300 12 14.700 14.700 12.400 15.400C9.400 16.200 4.500 15.900 1.700 16.100"/></g><g stroke="#b3e21e" stroke-width="2.500"><path d="M5 2.600C6.500 1.500 9.600 1.400 10.700 3C11.900 5 11.700 8.600 10.900 10.600"/><ellipse cx="7" cy="11.900" rx="4.400" ry="1.800"/><path d="M13.700 10.600C15.300 12 14.700 14.700 12.400 15.400C9.400 16.200 4.500 15.900 1.700 16.100"/></g></g><path d="M.8 1L3.700 2.900 1.200 4.100Z" fill="#d8560f"/><circle cx="6.700" cy="2.400" r=".55" fill="#1c2a10"/></svg>
<div class="sl" style="left:7px;top:46.66px;background:#7f7"></div>
<div class="t" style="left:23.33px;top:44.36px">text</div>
<svg width="10" height="10" fill="#77738f"><rect x="323.33" y="46.67" width="2.33" height="2.33"/><rect x="323.33" y="50.17" width="2.33" height="2.33"/><rect x="323.33" y="53.67" width="2.33" height="2.33"/><rect x="326.83" y="46.67" width="2.33" height="2.33"/><rect x="326.83" y="50.17" width="2.33" height="2.33"/><rect x="326.83" y="53.67" width="2.33" height="2.33"/><rect x="330.33" y="46.67" width="2.33" height="2.33"/><rect x="330.33" y="50.17" width="2.33" height="2.33"/><rect x="330.33" y="53.67" width="2.33" height="2.33"/></svg>
<div class="t r" style="right:22.17px;top:44.36px">STRING</div>
<div class="ta" style="left:11.4px;top:77.2px;width:315.3px;height:99px"><div>john caple, cannon snow covered trees, afremov
leonid, andreas achenbac, carl gustav carus, trees.
wide view, neville page, bonnard, noisy, redwood
sequoia trees, wizard reading a directory, lovecraft
illustration</div></div>
<div class="tb" style="left:0;top:-23.3px;width:54.4px;padding-left:9.8px">0.001s</div>
<div class="gb gw" style="right:33.5px;width:115px"><span style="width:98.2px">#12 Custom-Scripts</span></div>
<div class="gb gs" style="right:0;width:42.5px">#12</div>
</div>
</div></body></html>
